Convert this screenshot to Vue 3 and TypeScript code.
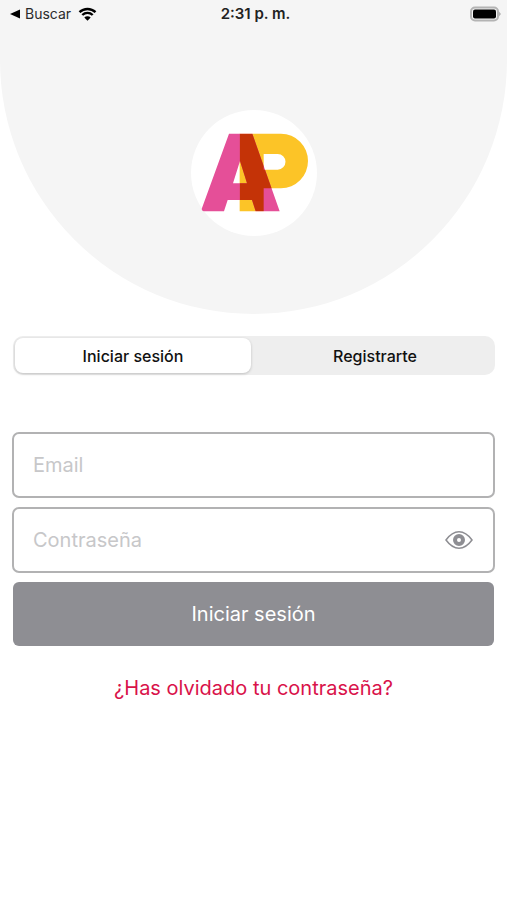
<script setup lang="ts">
import { ref } from 'vue'

type Tab = 'login' | 'register'

const tabs: { id: Tab; label: string }[] = [
  { id: 'login', label: 'Iniciar sesión' },
  { id: 'register', label: 'Registrarte' },
]

const activeTab = ref<Tab>('login')
const email = ref('')
const password = ref('')
const showPassword = ref(false)
</script>

<template>
  <div class="screen">
    <header class="hero">
      <div class="status">
        <a class="back" href="#">
          <svg class="caret" viewBox="0 0 10 10" aria-hidden="true">
            <path d="M0 5 10 0.5V9.500Z" />
          </svg>
          <span>Buscar</span>
          <svg class="wifi" viewBox="0 0 18 14" aria-hidden="true">
            <path d="M1 5.200A11.500 11.500 0 0 1 17 5.200M3.800 8A7.500 7.500 0 0 1 14.200 8" />
            <path class="dot" d="M9 13.800 5.800 10.600A4.600 4.600 0 0 1 12.200 10.600Z" />
          </svg>
        </a>
        <time class="clock">2:31 p. m.</time>
        <svg class="battery" viewBox="0 0 31 16" aria-hidden="true">
          <rect class="shell" x="1" y="1.500" width="27" height="13" rx="4" />
          <rect x="3" y="3.500" width="23" height="9" rx="2" />
          <path class="tip" d="M29 5.500 31 8 29 10.500Z" />
        </svg>
      </div>
      <div class="badge">
        <svg class="logo" viewBox="33 29 378 378" role="img" aria-label="AP">
          <defs>
            <clipPath id="stem-clip">
              <path d="M179 100H303A81 82 0 0 1 303 264H251V333H179ZM251 161V208H293A23 23 0 0 0 293 161Z" clip-rule="evenodd" />
            </clipPath>
          </defs>
          <path class="yellow" fill-rule="evenodd" d="M179 100H303A81 82 0 0 1 303 264H251V333H179ZM251 161V208H293A23 23 0 0 0 293 161Z" />
          <path class="pink" fill-rule="evenodd" d="M147 100H217L299 333H227L216 299H143L132 333H71Q63 331 66 323ZM180 182 159 249H201Z" />
          <path class="red" clip-path="url(#stem-clip)" fill-rule="evenodd" d="M147 100H217L299 333H227L216 299H143L132 333H71ZM180 182 159 249H201Z" />
        </svg>
      </div>
    </header>

    <main class="content">
      <div class="tabs" role="tablist">
        <button
          v-for="tab in tabs"
          :key="tab.id"
          type="button"
          role="tab"
          class="tab"
          :class="{ active: activeTab === tab.id }"
          :aria-selected="activeTab === tab.id"
          @click="activeTab = tab.id"
        >
          {{ tab.label }}
        </button>
      </div>

      <form class="form" @submit.prevent>
        <div class="field">
          <input v-model="email" type="email" placeholder="Email" aria-label="Email" />
        </div>
        <div class="field">
          <input
            v-model="password"
            :type="showPassword ? 'text' : 'password'"
            placeholder="Contraseña"
            aria-label="Contraseña"
          />
          <button
            type="button"
            class="eye"
            aria-label="Mostrar contraseña"
            @click="showPassword = !showPassword"
          >
            <svg viewBox="0 0 28 20" aria-hidden="true">
              <path d="M1 10Q7 1.800 14 1.800T27 10Q21 18.200 14 18.200T1 10Z" />
              <circle cx="14" cy="10" r="4" />
            </svg>
          </button>
        </div>
        <button type="submit" class="submit">Iniciar sesión</button>
      </form>

      <a class="forgot" href="#">¿Has olvidado tu contraseña?</a>
    </main>
  </div>
</template>

<style>
body {
  margin: 0;
  background: #ffffff;
}
</style>

<style scoped>
.screen {
  min-height: 100vh;
  background: #ffffff;
  font-family: Inter, "Liberation Sans", sans-serif;
  color: #111111;
}

.screen *,
.screen *::before {
  box-sizing: border-box;
}

.hero {
  display: flex;
  flex-direction: column;
  align-items: center;
  height: 314px;
  background: #f5f5f5;
  border-radius: 0 0 50% 50% / 0 0 254px 254px;
}

.status {
  display: grid;
  grid-template-columns: 1fr auto 1fr;
  align-items: center;
  width: 100%;
  height: 28px;
  padding: 0 6px 0 10px;
}

.back {
  display: flex;
  align-items: center;
  gap: 5px;
  font-size: 14px;
  line-height: 20px;
  color: #2b2b2b;
  text-decoration: none;
}

.caret {
  width: 10px;
  height: 10px;
  fill: #000000;
}

.wifi {
  width: 19px;
  height: 14px;
  margin-left: 2px;
  fill: none;
  stroke: #000000;
  stroke-width: 2.4;
}

.wifi .dot {
  fill: #000000;
  stroke: none;
}

.clock {
  font-size: 15px;
  line-height: 20px;
  font-weight: 600;
  color: #222222;
}

.battery {
  justify-self: end;
  width: 31px;
  height: 16px;
}

.battery .shell {
  fill: none;
  stroke: #b4b4b4;
  stroke-width: 2;
}

.battery .tip {
  fill: #b4b4b4;
}

.badge {
  width: 126px;
  height: 126px;
  margin-top: 82px;
  border-radius: 50%;
  background: #ffffff;
}

.logo {
  display: block;
  width: 100%;
  height: 100%;
}

.yellow {
  fill: #fcc427;
}

.pink {
  fill: #e54f98;
}

.red {
  fill: #c43307;
}

.content {
  display: flex;
  flex-direction: column;
  padding: 22px 12px 40px;
}

.tabs {
  display: grid;
  grid-template-columns: 1fr 1fr;
  column-gap: 6px;
  padding: 2px;
  margin: 0 0 0 1px;
  border-radius: 10px;
  background: #eeeeee;
}

.tab {
  height: 35px;
  padding: 0;
  border: 0;
  border-radius: 8px;
  background: transparent;
  font: 500 16px/20px Inter, "Liberation Sans", sans-serif;
  color: #111111;
  cursor: pointer;
}

.tab.active {
  background: #ffffff;
  box-shadow: 0 1px 3px rgba(0, 0, 0, 0.2);
}

.form {
  display: flex;
  flex-direction: column;
  gap: 9px;
  margin-top: 57px;
}

.field {
  display: flex;
  align-items: center;
  height: 66px;
  padding: 0 20px 0 19px;
  border: 2px solid #b2b2b3;
  border-radius: 7px;
}

.field input {
  flex: 1;
  min-width: 0;
  height: 100%;
  padding: 0;
  border: 0;
  outline: 0;
  background: transparent;
  font: 400 20px/24px Inter, "Liberation Sans", sans-serif;
  color: #111111;
}

.field input::placeholder {
  color: #c7c7c9;
  opacity: 1;
}

.eye {
  padding: 0;
  border: 0;
  background: transparent;
  cursor: pointer;
}

.eye svg {
  display: block;
  width: 28px;
  height: 20px;
  fill: none;
  stroke: #8e8e93;
  stroke-width: 1.500;
}

.eye circle {
  stroke-width: 4;
}

.submit {
  height: 64px;
  margin: 0 1px;
  padding: 0;
  border: 0;
  border-radius: 6px;
  background: #8e8e93;
  font: 400 20px/24px Inter, "Liberation Sans", sans-serif;
  color: #ffffff;
  cursor: pointer;
}

.forgot {
  align-self: center;
  margin-top: 30px;
  font-size: 20px;
  line-height: 24px;
  color: #d9124a;
  text-decoration: none;
}
</style>
